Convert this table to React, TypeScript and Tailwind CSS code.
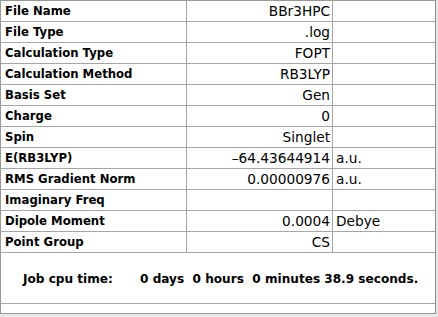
import React from "react";

const rows: [string, string, string][] = [
  ["File Name", "BBr3HPC", ""],
  ["File Type", ".log", ""],
  ["Calculation Type", "FOPT", ""],
  ["Calculation Method", "RB3LYP", ""],
  ["Basis Set", "Gen", ""],
  ["Charge", "0", ""],
  ["Spin", "Singlet", ""],
  ["E(RB3LYP)", "\u201364.43644914", "a.u."],
  ["RMS Gradient Norm", "0.00000976", "a.u."],
  ["Imaginary Freq", "", ""],
  ["Dipole Moment", "0.0004", "Debye"],
  ["Point Group", "CS", ""],
];

export default function App() {
  return (
    <div className="w-[438px] h-[317px] bg-[#e8e8e8] text-black" style={{ fontFamily: '"DejaVu Sans", "Liberation Sans", sans-serif' }}>
      <div className="w-[436px] bg-white border border-[#999] border-r-[#8a8a8a]">
        {rows.map(([label, value, unit]) => (
          <div key={label} className="flex h-[21px] border-b border-[#a6a6a6]">
            <div className="w-[186px] border-r border-[#a6a6a6] pl-[4px] pt-[2px] flex items-center text-[11.7px] font-bold leading-none">
              {label}
            </div>
            <div className="w-[146px] border-r border-[#a6a6a6] pr-[2px] pt-[2px] flex items-center justify-end text-[13.7px] leading-none">
              {value}
            </div>
            <div className="flex-1 pl-[3px] pt-[2px] flex items-center text-[13.7px] leading-none">{unit}</div>
          </div>
        ))}
        <div className="flex items-center h-[51px] pt-[2px] border-b border-[#a6a6a6] text-[12.1px] font-bold leading-none whitespace-pre">
          <span className="ml-[22px] w-[117px]">Job cpu time:</span>
          <span>{"0 days  0 hours  0 minutes 38.9 seconds."}</span>
        </div>
        <div className="h-[9px]" />
      </div>
    </div>
  );
}
